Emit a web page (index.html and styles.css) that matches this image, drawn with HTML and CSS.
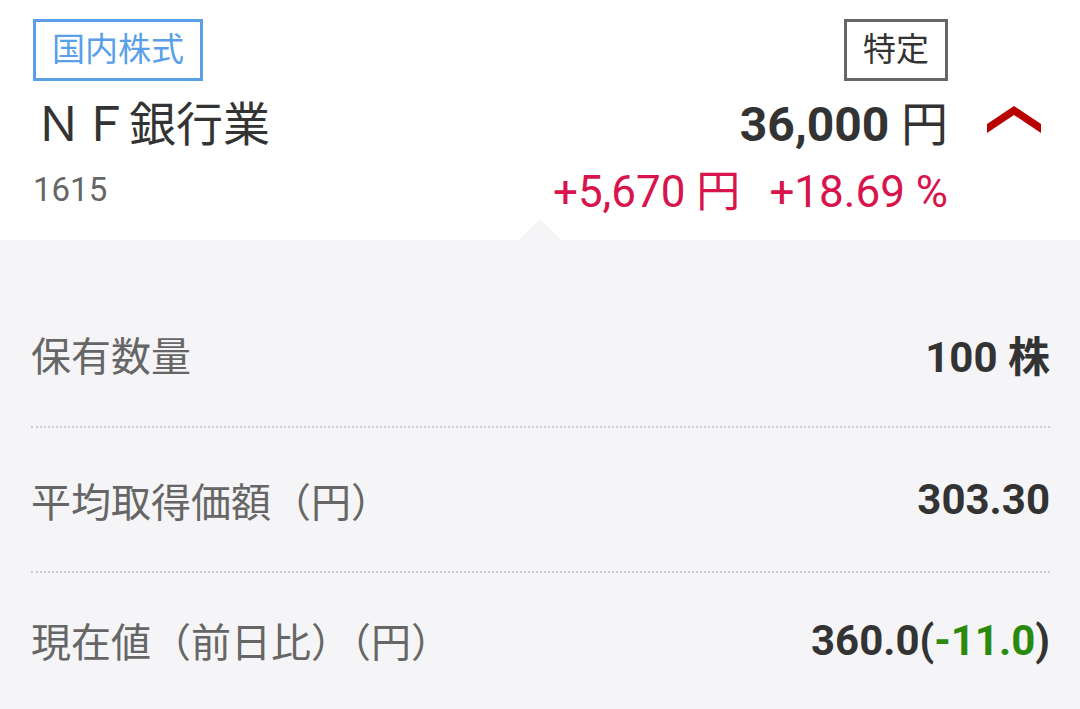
FILE: index.html
```html
<!DOCTYPE html>
<html lang="ja">

<head>
    <meta charset="UTF-8">
    <meta name="viewport" content="width=device-width, initial-scale=1.0">
    <title>保有銘柄詳細</title>
    <link rel="stylesheet" href="styles.css">
</head>

<body>
    <div class="summary">
        <div class="tag tag-market">国内株式</div>
        <div class="tag tag-account">特定</div>
        <div class="spacer"></div>

        <div class="name">ＮＦ銀行業</div>
        <div class="price"><span class="num">36,000</span> 円</div>
        <div class="toggle">
            <svg width="56" height="30" viewBox="0 0 56 30">
                <polygon points="1,18 28,0 55,18 55,27 28,9 1,27" fill="#b80000" />
            </svg>
        </div>

        <div class="code">1615</div>
        <div class="change">+5,670 円<span class="gap"></span>+18.69 %</div>
        <div class="spacer"></div>
    </div>

    <div class="details">
        <div class="row">
            <div class="label">保有数量</div>
            <div class="value">100 株</div>
        </div>
        <div class="row">
            <div class="label">平均取得価額（円）</div>
            <div class="value">303.30</div>
        </div>
        <div class="row">
            <div class="label">現在値（前日比）（円）</div>
            <div class="value">360.0(<span class="down">-11.0</span>)</div>
        </div>
    </div>
</body>

</html>
```

FILE: styles.css
```css
/* General Styles */
body {
    font-family: Roboto, 'Noto Sans CJK JP', sans-serif;
    margin: 0;
    padding: 0;
    background-color: #f5f5f7;
    color: #333;
}

/* Summary header */
.summary {
    background-color: #fff;
    height: 240px;
    box-sizing: border-box;
    padding: 19px 0 0 33px;
    display: grid;
    grid-template-columns: 1fr auto 132px;
    grid-template-rows: 62px 70px 70px;
    align-items: center;
}

.tag {
    height: 62px;
    box-sizing: border-box;
    font-size: 33px;
    line-height: 56px;
    padding: 0 16px;
    justify-self: start;
}

.tag-market {
    border: 3px solid #5aa0e8;
    color: #5aa0e8;
}

.tag-account {
    border: 3px solid #666;
    color: #333;
    justify-self: end;
}

.name {
    font-size: 47px;
    padding-top: 8px;
    padding-left: 2px;
}

.price {
    font-size: 47px;
    padding-top: 8px;
    text-align: right;
}

.price .num {
    font-weight: bold;
    font-size: 48px;
}

.toggle {
    display: flex;
    justify-content: center;
    padding-top: 10px;
}

.code {
    font-size: 33px;
    color: #666;
    padding-top: 6px;
}

.change {
    font-size: 44px;
    color: #d7144c;
    text-align: right;
    padding-top: 4px;
}

.change .gap {
    display: inline-block;
    width: 29px;
}

/* Details panel */
.details {
    position: relative;
    padding: 41px 30px 0 31px;
}

.details::before {
    content: '';
    position: absolute;
    top: -21px;
    left: 519px;
    border-left: 21px solid transparent;
    border-right: 21px solid transparent;
    border-bottom: 21px solid #f5f5f7;
}

.row {
    display: flex;
    justify-content: space-between;
    align-items: center;
    height: 145px;
    border-bottom: 2px dotted #ccc;
}

.row:first-child {
    height: 145px;
}

.row + .row {
    height: 143px;
}

.row:last-child {
    border-bottom: none;
    height: 134px;
}

.label {
    font-size: 40px;
    color: #666;
}

.value {
    font-size: 42px;
    font-weight: bold;
    color: #333;
}

.down {
    color: #2b8a0e;
}
```
